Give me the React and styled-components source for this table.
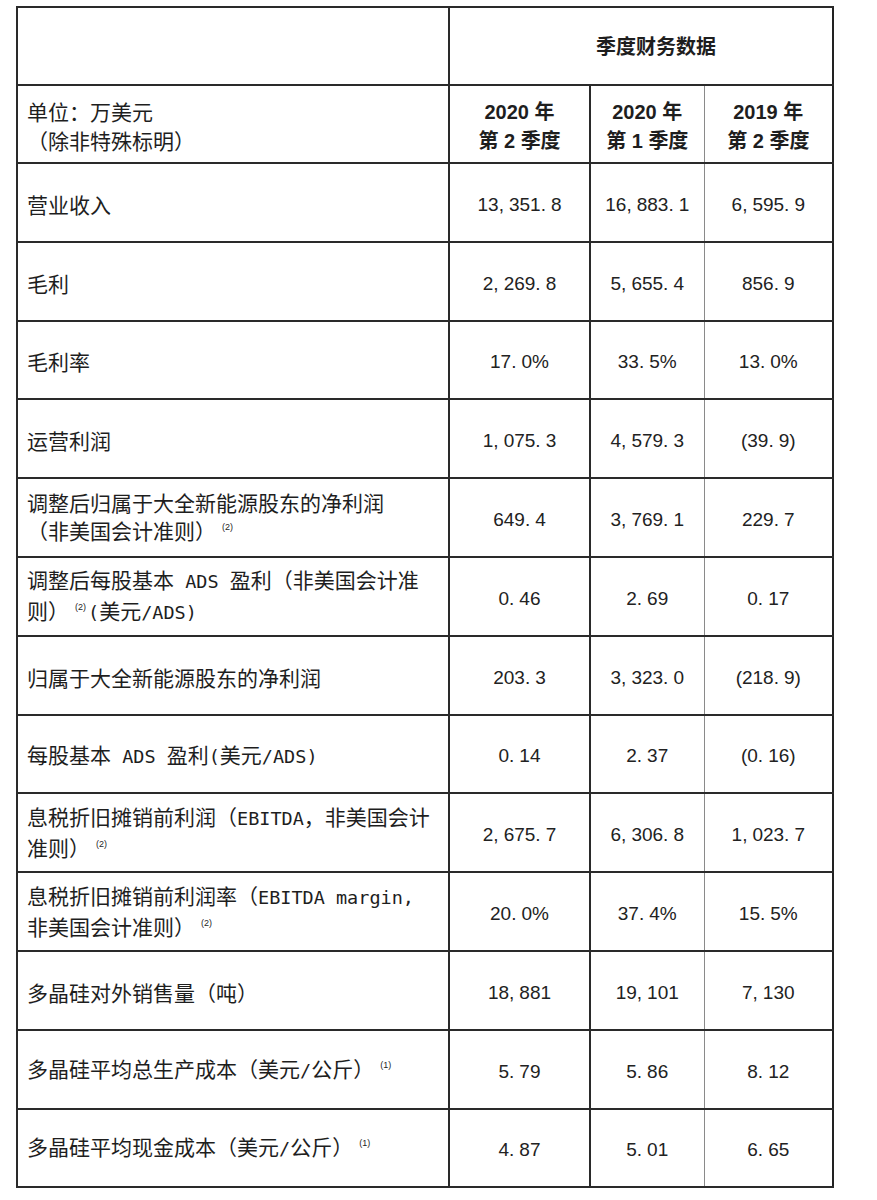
import React from 'react'
import styled, { createGlobalStyle } from 'styled-components'

const GlobalStyle = createGlobalStyle`
  body {
    margin: 0;
    background: #fff;
  }
`

const Page = styled.div`
  padding: 6px 0 20px 16px;
  font-family: "Noto Sans CJK SC", sans-serif;
  color: #1e1e1e;
`

const Table = styled.table`
  width: 816px;
  border-collapse: collapse;
  table-layout: fixed;
  border: 2px solid #222;
`

const Col = styled.col`
  width: ${p => p.$w}px;
`

const Row = styled.tr`
  height: ${p => p.$h || 78.8}px;
`

const Cell = styled.td`
  border-top: 2px solid #2a2a2a;
  border-bottom: 2px solid #2a2a2a;
  border-left: ${p => (p.$thin ? '1px solid #8a8a8a' : '2px solid #2a2a2a')};
  padding: 0;
  text-align: center;
  vertical-align: middle;
`

const LabelCell = styled(Cell)`
  text-align: left;
  padding: 3px 0 0 9px;
  font-size: 21px;
  line-height: 28px;
  white-space: nowrap;
`

const UnitCell = styled(LabelCell)`
  line-height: 29px;
  padding-top: 4px;
`

const HeadCell = styled(Cell)`
  font-size: 20px;
  font-weight: 700;
  line-height: 28px;
  padding-left: ${p => p.$shift || 0}px;
  padding-top: ${p => (p.$shift ? 0 : 4)}px;
`

const NumCell = styled(Cell)`
  font-family: "Liberation Sans", Arial, sans-serif;
  font-size: 19px;
  color: #222;
  white-space: nowrap;
  padding-top: 5px;
`

const Punct = styled.span`
  margin-right: 5px;
`

const Line = styled.div``

const Lat = styled.span`
  font-family: "DejaVu Sans Mono", monospace;
  font-size: 18.5px;
`

const LatBold = styled.span`
  font-family: "Liberation Sans", Arial, sans-serif;
  font-size: 20px;
`

const Sup = styled.span`
  position: relative;
  top: -9px;
  font-family: "Liberation Sans", Arial, sans-serif;
  font-size: 9px;
  margin-left: 6px;
  margin-right: 2px;
`

// wrap ascii runs so latin text gets the half-width font, ^n marks a footnote
const mix = (text, Latin = Lat) =>
  text.split(/(\^\d|[\x00-\x7F]+)/).filter(Boolean).map((part, i) => {
    if (part.startsWith('^')) return <Sup key={i}>({part.slice(1)})</Sup>
    if (/^[\x00-\x7F]+$/.test(part)) return <Latin key={i}>{part}</Latin>
    return <React.Fragment key={i}>{part}</React.Fragment>
  })

// commas and points take half-width space in the source font
const num = v =>
  v.split(/([,.])/).filter(Boolean).map((part, i) =>
    part === ',' || part === '.' ? <Punct key={i}>{part}</Punct> : part
  )

const rows = [
  { label: ['营业收入'], values: ['13,351.8', '16,883.1', '6,595.9'] },
  { label: ['毛利'], values: ['2,269.8', '5,655.4', '856.9'] },
  { label: ['毛利率'], values: ['17.0%', '33.5%', '13.0%'] },
  { label: ['运营利润'], values: ['1,075.3', '4,579.3', '(39.9)'] },
  { label: ['调整后归属于大全新能源股东的净利润', '（非美国会计准则）^2'], values: ['649.4', '3,769.1', '229.7'] },
  { label: ['调整后每股基本 ADS 盈利（非美国会计准', '则）^2(美元/ADS)'], values: ['0.46', '2.69', '0.17'] },
  { label: ['归属于大全新能源股东的净利润'], values: ['203.3', '3,323.0', '(218.9)'] },
  { label: ['每股基本 ADS 盈利(美元/ADS)'], values: ['0.14', '2.37', '(0.16)'] },
  { label: ['息税折旧摊销前利润（EBITDA，非美国会计', '准则）^2'], values: ['2,675.7', '6,306.8', '1,023.7'] },
  { label: ['息税折旧摊销前利润率（EBITDA margin,', '非美国会计准则）^2'], values: ['20.0%', '37.4%', '15.5%'] },
  { label: ['多晶硅对外销售量（吨）'], values: ['18,881', '19,101', '7,130'] },
  { label: ['多晶硅平均总生产成本（美元/公斤）^1'], values: ['5.79', '5.86', '8.12'] },
  { label: ['多晶硅平均现金成本（美元/公斤）^1'], values: ['4.87', '5.01', '6.65'] },
]

const periods = [
  ['2020 年', '第 2 季度'],
  ['2020 年', '第 1 季度'],
  ['2019 年', '第 2 季度'],
]

export default function App() {
  return (
    <Page>
      <GlobalStyle />
      <Table>
        <colgroup>
          <Col $w={432} />
          <Col $w={141} />
          <Col $w={114} />
          <Col $w={129} />
        </colgroup>
        <thead>
          <Row $h={78}>
            <Cell />
            <HeadCell colSpan={3} $shift={30}>季度财务数据</HeadCell>
          </Row>
          <Row $h={78}>
            <UnitCell>
              <Line>单位：万美元</Line>
              <Line>（除非特殊标明）</Line>
            </UnitCell>
            {periods.map((p, i) => (
              <HeadCell key={i} $thin={i === 2}>
                <Line>{mix(p[0], LatBold)}</Line>
                <Line>{mix(p[1], LatBold)}</Line>
              </HeadCell>
            ))}
          </Row>
        </thead>
        <tbody>
          {rows.map((r, i) => (
            <Row key={i}>
              <LabelCell>
                {r.label.map((l, j) => (
                  <Line key={j}>{mix(l)}</Line>
                ))}
              </LabelCell>
              {r.values.map((v, j) => (
                <NumCell key={j} $thin={j === 2}>{num(v)}</NumCell>
              ))}
            </Row>
          ))}
        </tbody>
      </Table>
    </Page>
  )
}
